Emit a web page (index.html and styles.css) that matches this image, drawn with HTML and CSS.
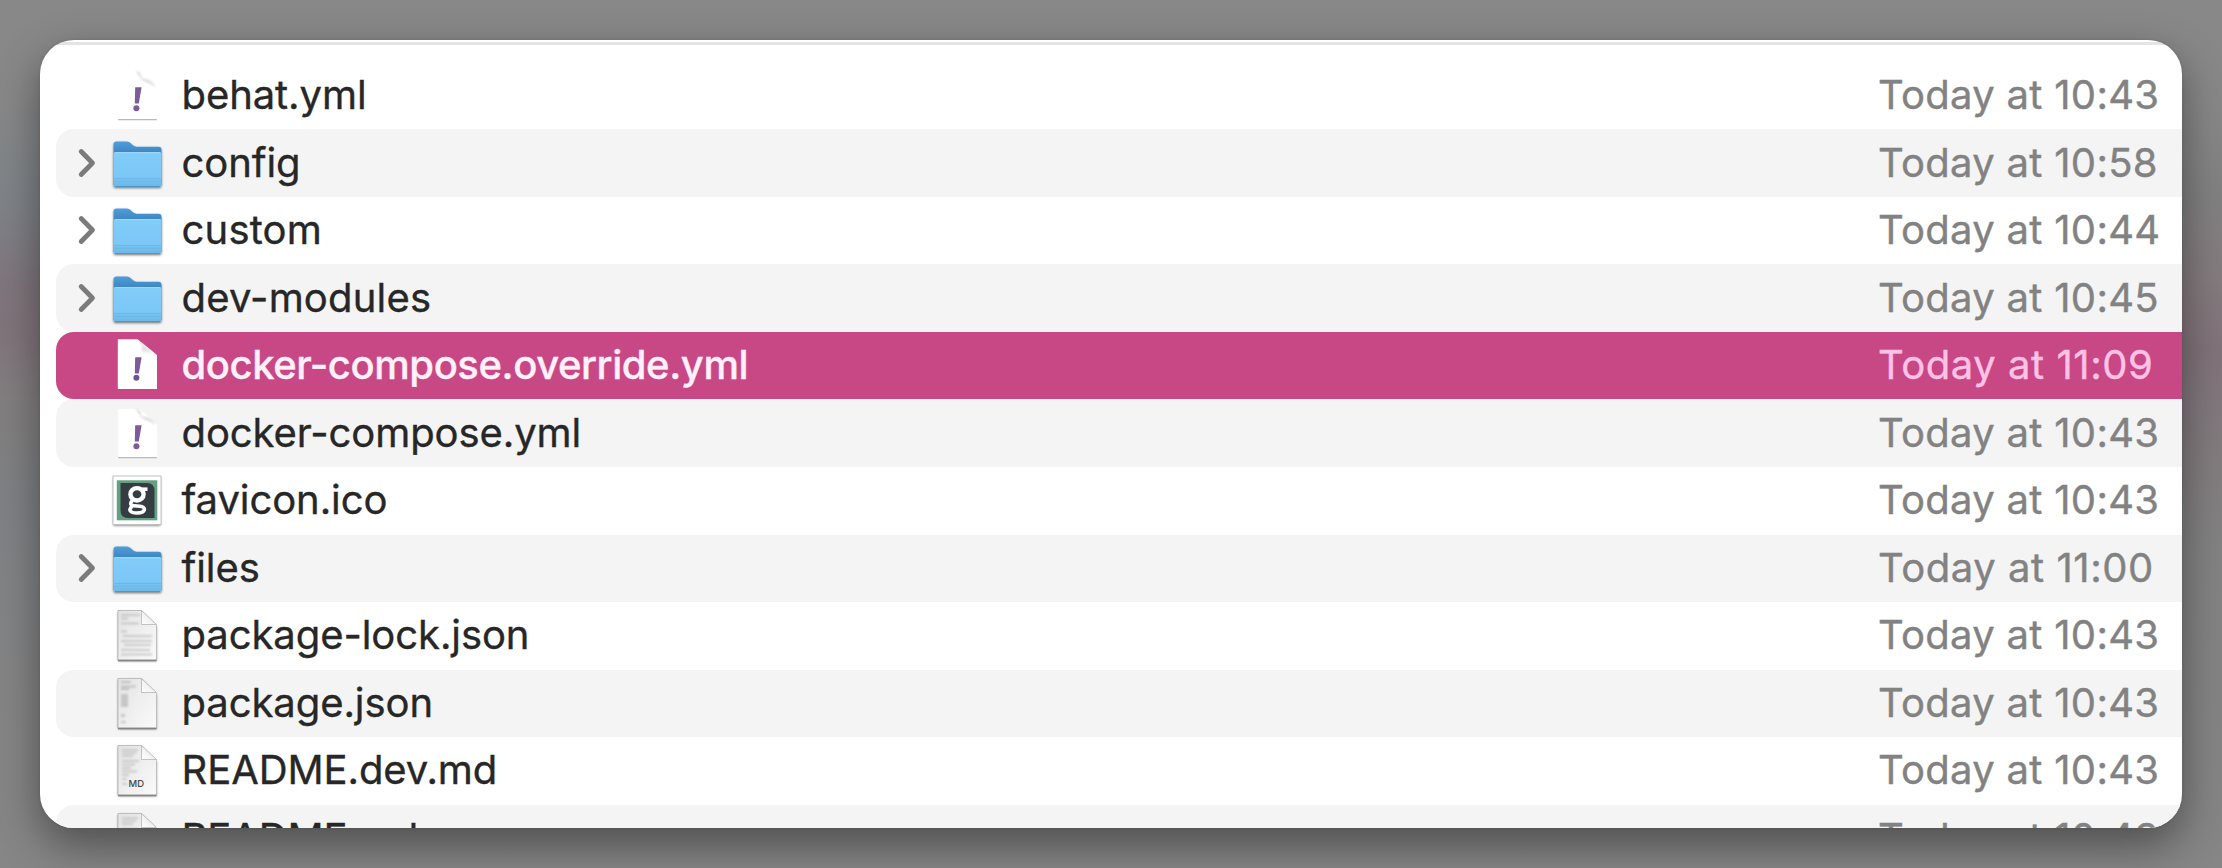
FILE: index.html
```
<!DOCTYPE html>
<html lang="en">
<head>
<meta charset="utf-8">
<title>Files</title>
<link rel="stylesheet" href="styles.css">
</head>
<body>
<svg class="defs" width="0" height="0" aria-hidden="true">
  <defs>
    <linearGradient id="folder-front" x1="0" y1="0" x2="0" y2="1">
      <stop offset="0" stop-color="#82ccf8"/><stop offset=".7" stop-color="#7bc7f6"/><stop offset="1" stop-color="#6ab6e6"/>
    </linearGradient>
    <linearGradient id="folder-back" x1="0" y1="0" x2="0" y2="1">
      <stop offset="0" stop-color="#4f9edb"/><stop offset=".25" stop-color="#3d86c4"/><stop offset="1" stop-color="#3d86c4"/>
    </linearGradient>
    <linearGradient id="paper" x1="0" y1="0" x2="1" y2="1">
      <stop offset="0" stop-color="#e3e3e3"/><stop offset="1" stop-color="#fafafa"/>
    </linearGradient>
    <linearGradient id="fold" x1="0" y1="1" x2="1" y2="0">
      <stop offset="0" stop-color="#ffffff"/><stop offset=".5" stop-color="#f0f0f0"/><stop offset="1" stop-color="#d5d5d5"/>
    </linearGradient>
    <filter id="soft" x="-20%" y="-20%" width="140%" height="140%"><feGaussianBlur stdDeviation=".8"/></filter>
    <filter id="soft-shadow" x="-20%" y="-20%" width="140%" height="150%"><feDropShadow dx="0" dy="1.2" stdDeviation="1" flood-color="#000" flood-opacity=".5"/></filter>
  </defs>
  <symbol id="chevron" viewBox="0 0 53 67">
    <path d="M25.200 21.500 36.500 33 25.200 44.500" fill="none" stroke="#7b7b7b" stroke-width="4.800" stroke-linecap="round" stroke-linejoin="round"/>
  </symbol>
  <symbol id="folder" viewBox="0 0 56 67">
    <g filter="url(#soft-shadow)">
      <path d="M4.500 55V14.500q0-3 3-3H18q2 0 3.500 1.500l2.500 2.300q1.500 1.400 3.500 1.400H49.500q3 0 3 3V55z" fill="url(#folder-back)"/>
      <rect x="4.500" y="22" width="48" height="35" rx="2.600" fill="url(#folder-front)"/>
    </g>
    <path d="M5.500 22.600H51.500" stroke="#a0dafc" stroke-width="1"/>
    <path d="M5 48.500H52M5 51.200H52" stroke="#60abdb" stroke-width=".7" opacity=".7"/>
    <path d="M6 56.500H51" stroke="#4b98cb" stroke-width="1.200"/>
  </symbol>
  <symbol id="yml" viewBox="0 0 56 67">
    <path d="M9.200 57.400V9H31L48 24.500V57.400z" fill="#fff"/>
    <path d="M9.500 9.200H27" stroke="#d6d6d6" stroke-width="1.200" filter="url(#soft)"/>
    <path d="M27 9.200c4.500.5 4.500 4 5.500 8 5 0 10 1 13 7-4-4-9-4-13-7" fill="#d8d8d8" stroke="#dcdcdc" stroke-width="1" filter="url(#soft)"/>
    <path d="M9.200 57.600H47.800" stroke="#b9b9b9" stroke-width="1.300"/>
    <path d="M26.200 25.200h6.400l-2.800 16.200h-4z" fill="#7c5a9b"/>
    <circle cx="27.400" cy="46.200" r="3" fill="#7c5a9b"/>
  </symbol>
  <symbol id="yml-selected" viewBox="0 0 56 67">
    <path d="M8.800 7.300H28.500L48 23V57H8.800z" fill="#fff"/>
    <path d="M29 8c4 2 4 7 4 12 5-1 10 0 14 4z" fill="#e4dfe3" filter="url(#soft)"/>
    <path d="M26.200 25.200h6.400l-2.800 16.200h-4z" fill="#7c5a9b"/>
    <circle cx="27.400" cy="45.800" r="3" fill="#6b5490"/>
  </symbol>
  <symbol id="ico" viewBox="0 0 56 67">
    <rect x="4.500" y="9.500" width="47" height="48" fill="#fff" filter="url(#soft-shadow)"/>
    <rect x="4" y="9" width="48" height="48.500" fill="#fff" stroke="#b4b4b4" stroke-width=".8"/>
    <rect x="7.800" y="13.300" width="40.500" height="40" fill="#62a081"/>
    <path d="M11.500 16H38Q45.500 16 45.500 24V51H19Q11.500 51 11.500 43z" fill="#343d42"/>
    <path d="M33 22.200H38.500" fill="none" stroke="#fff" stroke-width="3.600"/>
    <ellipse cx="28" cy="27.300" rx="6.600" ry="6.200" fill="none" stroke="#fff" stroke-width="4.400"/>
    <path d="M23.500 33.500c-3 2.500-2 5 1.500 5.300l6 .4c6.500.6 6 6.800-3 6.800-7.500 0-8.800-3.500-5-6.500" fill="none" stroke="#fff" stroke-width="3.600"/>
  </symbol>
  <symbol id="page" viewBox="0 0 56 67">
    <path d="M9 58V8.500H32.500L47.500 23.500V58z" fill="#fff" filter="url(#soft-shadow)"/>
    <path d="M9 58V8.500H32.500L47.500 23.500V58z" fill="url(#paper)" stroke="#b8b8b8" stroke-width=".9"/>
    <path d="M32.500 8.500V22.500H47.500z" fill="url(#fold)" stroke="#b5b5b5" stroke-width=".8"/>
    <path d="M9 58.500H47.500" stroke="#858585" stroke-width="1.600"/>
  </symbol>
  <symbol id="text-lines" viewBox="0 0 56 67">
    <path d="M12 13H31M12 16.500H19M12 21.500H30M12 29.500H18M14 34H43M12 39H43M15 43H42M12 48H41M12 52.500H43" stroke="#bdbdbd" stroke-width="1.400" filter="url(#soft)"/>
  </symbol>
  <symbol id="text-json" viewBox="0 0 56 67">
    <path d="M12 12H22M12 16.500H27M12 19H20" stroke="#c0c0c0" stroke-width="1.800" filter="url(#soft)"/>
    <path d="M12 24h7v13h-7zM12 44h4v3h-4zM12 51h5v2h-5z" fill="#c6c6c6" filter="url(#soft)"/>
    <path d="M20 34H28" stroke="#cfcfcf" stroke-width="1.500" filter="url(#soft)"/>
  </symbol>
  <symbol id="text-md" viewBox="0 0 56 67">
    <path d="M13 13H29M13 16H27M13 19H24M13 24H30M13 27.500H26M13 31H22M13 34.500H28M13 38H20M13 42H18M13 47H18" stroke="#cacaca" stroke-width="1.800" filter="url(#soft)"/>
  </symbol>
</svg>

<main class="window">
  <ul class="list">
    <li class="row"><span class="twist"></span><svg class="icon"><use href="#yml"/></svg><span class="name">behat.yml</span><time class="date">Today at 10:43</time></li>
    <li class="row"><svg class="twist"><use href="#chevron"/></svg><svg class="icon"><use href="#folder"/></svg><span class="name">config</span><time class="date">Today at 10:58</time></li>
    <li class="row"><svg class="twist"><use href="#chevron"/></svg><svg class="icon"><use href="#folder"/></svg><span class="name loose">custom</span><time class="date">Today at 10:44</time></li>
    <li class="row"><svg class="twist"><use href="#chevron"/></svg><svg class="icon"><use href="#folder"/></svg><span class="name loose">dev-modules</span><time class="date">Today at 10:45</time></li>
    <li class="row selected"><span class="twist"></span><svg class="icon"><use href="#yml-selected"/></svg><span class="name">docker-compose.override.yml</span><time class="date ones">Today at 11:09</time></li>
    <li class="row"><span class="twist"></span><svg class="icon"><use href="#yml"/></svg><span class="name">docker-compose.yml</span><time class="date">Today at 10:43</time></li>
    <li class="row"><span class="twist"></span><svg class="icon"><use href="#ico"/></svg><span class="name">favicon.ico</span><time class="date">Today at 10:43</time></li>
    <li class="row"><svg class="twist"><use href="#chevron"/></svg><svg class="icon"><use href="#folder"/></svg><span class="name">files</span><time class="date ones">Today at 11:00</time></li>
    <li class="row"><span class="twist"></span><svg class="icon"><use href="#page"/><use href="#text-lines"/></svg><span class="name">package-lock.json</span><time class="date">Today at 10:43</time></li>
    <li class="row"><span class="twist"></span><svg class="icon"><use href="#page"/><use href="#text-json"/></svg><span class="name">package.json</span><time class="date">Today at 10:43</time></li>
    <li class="row"><span class="twist"></span><svg class="icon"><use href="#page"/><use href="#text-md"/><text class="badge" x="19.500" y="49.500">MD</text></svg><span class="name">README.dev.md</span><time class="date">Today at 10:43</time></li>
    <li class="row"><span class="twist"></span><svg class="icon"><use href="#page"/><use href="#text-md"/></svg><span class="name">README.md</span><time class="date">Today at 10:43</time></li>
  </ul>
</main>
</body>
</html>
```
FILE: styles.css
```
* { box-sizing: border-box; }

body {
  margin: 0;
  height: 868px;
  padding: 40px;
  overflow: hidden;
  font-family: Inter, "Liberation Sans", sans-serif;
  background:
    linear-gradient(to bottom, #888 0, #888 100px, #7f8489 200px, #80767d 290px, #82757c 335px, #827f80 400px, #7f8285 500px, #858585 680px, #868686 868px) left / 50% 100% no-repeat,
    linear-gradient(to bottom, #888 0, #888 110px, #828282 190px, #847b7e 280px, #81747a 350px, #827b7e 440px, #838383 550px, #868686 868px) right / 50% 100% no-repeat;
}

.defs { position: absolute; }

.window {
  height: 788px;
  padding-left: 16px;
  overflow: hidden;
  border-radius: 34px;
  background: linear-gradient(#fff 2px, #e4e4e4 2px, #e4e4e4 4.500px, #fff 4.500px);
  box-shadow: 0 17px 44px rgba(0, 0, 0, .42), 0 0 3px rgba(0, 0, 0, .12);
}

.list {
  margin: 0;
  padding: 21.700px 0 0;
  list-style: none;
}

.row {
  display: flex;
  align-items: center;
  height: 67.550px;
  border-radius: 18px 0 0 18px;
  font-size: 40px;
  line-height: 48px;
  white-space: nowrap;
}

.row:nth-child(even) { background: #f4f4f4; }

.twist { flex: none; width: 53px; height: 67px; }
.icon { flex: none; width: 56px; height: 67px; }

.name {
  flex: 1;
  margin-left: 16.500px;
  padding-bottom: 1px;
  color: #272727;
  letter-spacing: -.080px;
  -webkit-text-stroke: .350px currentColor;
}

.name.loose { letter-spacing: .200px; }

.date {
  flex: none;
  width: 304px;
  padding-bottom: 1px;
  color: #828282;
  letter-spacing: .300px;
  -webkit-text-stroke: .400px currentColor;
}

.date.ones { letter-spacing: .550px; }

.row.selected { background: #c74884; }
.selected .name { color: #fff0fa; font-weight: 500; letter-spacing: -.430px; }
.selected .date { color: #ffc2e6; }

.badge {
  font-size: 9.500px;
  font-weight: 500;
  fill: #444;
}
```
